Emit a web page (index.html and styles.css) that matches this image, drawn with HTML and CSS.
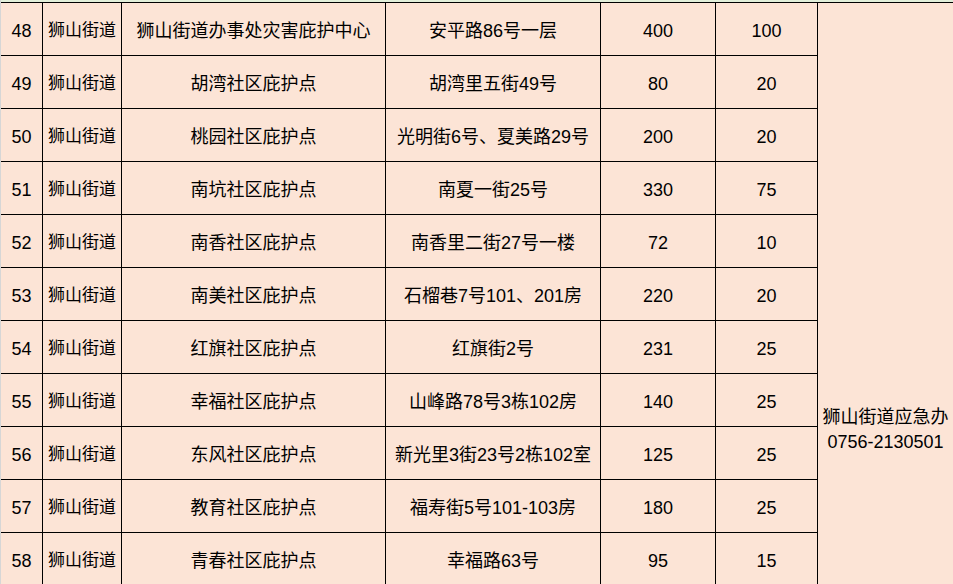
FILE: index.html
```html
<!DOCTYPE html>
<html lang="zh-CN">
<head>
<meta charset="utf-8">
<title>狮山街道庇护点</title>
<link rel="stylesheet" href="styles.css">
</head>
<body>
<div class="page">
  <div class="edge"></div>
  <div class="sheet">
    <div class="band"></div>
    <table class="grid">
      <tbody>
        <tr>
          <td class="c-no">48</td>
          <td class="c-street">狮山街道</td>
          <td class="c-name">狮山街道办事处灾害庇护中心</td>
          <td class="c-addr">安平路86号一层</td>
          <td class="c-area">400</td>
          <td class="c-cap">100</td>
          <td class="c-contact" rowspan="11"><span class="line">狮山街道应急办</span><span class="line">0756-2130501</span></td>
        </tr>
        <tr><td>49</td><td class="street">狮山街道</td><td>胡湾社区庇护点</td><td>胡湾里五街49号</td><td>80</td><td>20</td></tr>
        <tr><td>50</td><td class="street">狮山街道</td><td>桃园社区庇护点</td><td>光明街6号、夏美路29号</td><td>200</td><td>20</td></tr>
        <tr><td>51</td><td class="street">狮山街道</td><td>南坑社区庇护点</td><td>南夏一街25号</td><td>330</td><td>75</td></tr>
        <tr><td>52</td><td class="street">狮山街道</td><td>南香社区庇护点</td><td>南香里二街27号一楼</td><td>72</td><td>10</td></tr>
        <tr><td>53</td><td class="street">狮山街道</td><td>南美社区庇护点</td><td>石榴巷7号101、201房</td><td>220</td><td>20</td></tr>
        <tr><td>54</td><td class="street">狮山街道</td><td>红旗社区庇护点</td><td>红旗街2号</td><td>231</td><td>25</td></tr>
        <tr><td>55</td><td class="street">狮山街道</td><td>幸福社区庇护点</td><td>山峰路78号3栋102房</td><td>140</td><td>25</td></tr>
        <tr><td>56</td><td class="street">狮山街道</td><td>东风社区庇护点</td><td>新光里3街23号2栋102室</td><td>125</td><td>25</td></tr>
        <tr><td>57</td><td class="street">狮山街道</td><td>教育社区庇护点</td><td>福寿街5号101-103房</td><td>180</td><td>25</td></tr>
        <tr><td>58</td><td class="street">狮山街道</td><td>青春社区庇护点</td><td>幸福路63号</td><td>95</td><td>15</td></tr>
      </tbody>
    </table>
  </div>
</div>
</body>
</html>
```

FILE: styles.css
```css
html, body {
  margin: 0;
  padding: 0;
  overflow: hidden;
  background: #fce4d6;
}

.page {
  display: flex;
  width: 953px;
  height: 584px;
  overflow: hidden;
}

.edge {
  flex: 0 0 1px;
  background: #d6d6d6;
}

.sheet {
  flex: 1 1 auto;
  display: flex;
  flex-direction: column;
}

.band {
  flex: 0 0 2px;
  background: #e2efda;
}

.grid {
  border-collapse: separate;
  border-spacing: 0;
  table-layout: fixed;
  width: 952px;
  border-top: 1px solid #000;
  font-family: "Liberation Sans", "Noto Sans CJK SC", sans-serif;
  font-size: 18px;
  color: #000;
}

.grid td {
  box-sizing: border-box;
  height: 53px;
  padding: 0;
  border-right: 1px solid #000;
  border-bottom: 1px solid #000;
  text-align: center;
  vertical-align: middle;
  white-space: nowrap;
  line-height: 22px;
  padding-top: 3px;
}

.grid td.c-no { width: 42px; }
.grid td.c-street { width: 79px; font-size: 17px; }
.grid td.c-name { width: 264px; }
.grid td.c-addr { width: 215px; }
.grid td.c-area { width: 115px; }
.grid td.c-cap { width: 102px; }

.grid td.street { font-size: 17px; }

.grid td.c-contact {
  border-right: none;
  vertical-align: top;
  padding-top: 402px;
  line-height: 25px;
}

.line {
  display: block;
}
```
